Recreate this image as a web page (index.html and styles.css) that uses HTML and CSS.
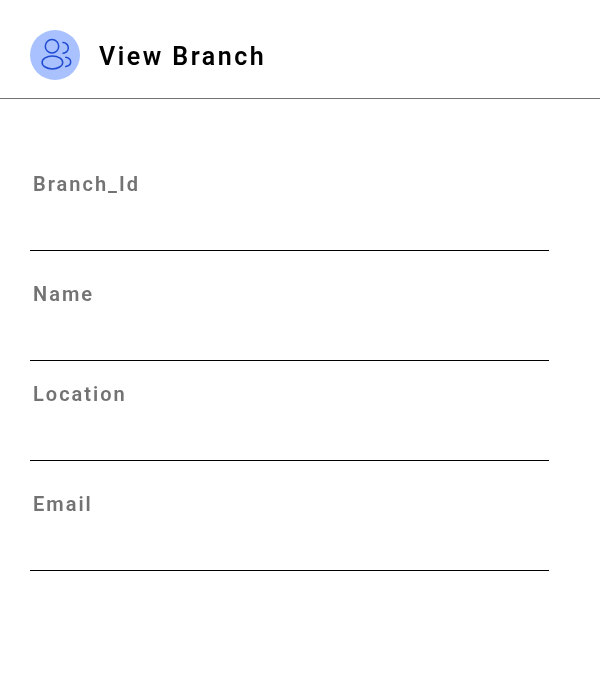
FILE: index.html
```html
<!DOCTYPE html>
<html lang="en">
<head>
<meta charset="utf-8">
<title>View Branch</title>
<link rel="stylesheet" href="styles.css">
</head>
<body>
<header class="header">
  <span class="avatar">
    <svg viewBox="0 0 50 50" width="50" height="50" fill="none" stroke="#1f4bd1" stroke-width="1.5" stroke-linecap="round">
      <circle cx="22" cy="16.3" r="6.7"/>
      <ellipse cx="22.4" cy="32.4" rx="10.3" ry="6.5"/>
      <path d="M33 12.6A5.3 5.3 0 0 1 33 23.2"/>
      <path d="M35.8 27.3C42.3 28.7 42.3 35.3 35.8 36.5"/>
    </svg>
  </span>
  <h1 class="title">View Branch</h1>
</header>
<main class="fields">
  <div class="field field-tall"><span class="label">Branch_Id</span></div>
  <div class="field field-tall"><span class="label">Name</span></div>
  <div class="field"><span class="label">Location</span></div>
  <div class="field field-tall"><span class="label">Email</span></div>
</main>
</body>
</html>
```
FILE: styles.css
```css
* { box-sizing: border-box; }
body { margin: 0; background: #fff; font-family: Roboto, sans-serif; }
.header { display: flex; align-items: flex-start; gap: 19px; height: 99px; padding: 30px 30px 0; border-bottom: 1px solid #737373; }
.avatar { width: 50px; height: 50px; border-radius: 50%; background: #a9c1ff; }
.avatar svg { display: block; }
.title, .label { will-change: transform; }
.title { margin: 12px 0 0; font-size: 25px; line-height: 30px; font-weight: 600; letter-spacing: 0.1em; color: #000; }
.fields { width: 519px; margin: 42px 0 0 30px; }
.field { height: 100px; padding: 21px 3px 0; border-bottom: 1px solid #000; }
.field-tall { height: 110px; padding-top: 31px; }
.label { display: block; font-size: 20px; line-height: 24px; font-weight: 600; letter-spacing: 0.1em; color: #737373; }
```
